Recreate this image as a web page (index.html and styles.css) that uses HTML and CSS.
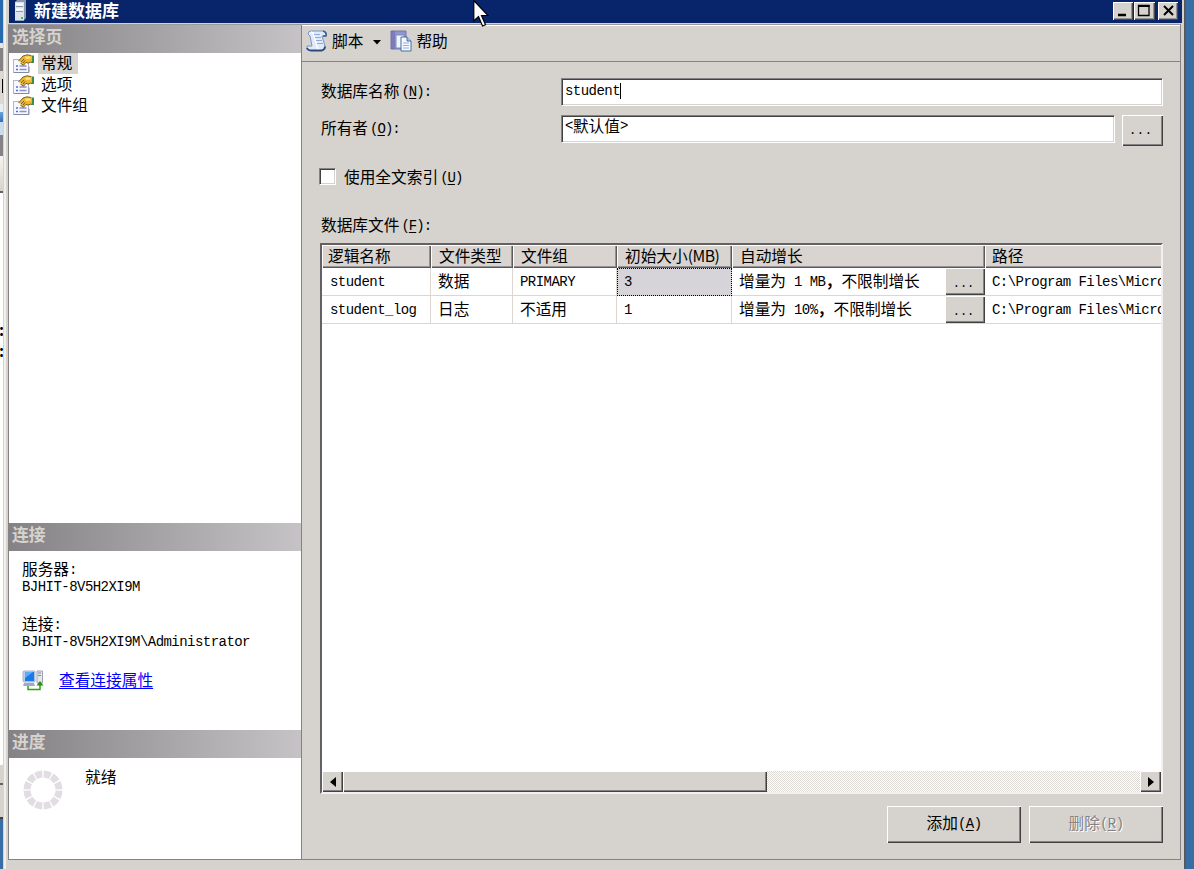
FILE: index.html
```html
<!DOCTYPE html>
<html lang="zh-CN">
<head>
  <meta charset="UTF-8">
  <title>新建数据库</title>
  <link rel="stylesheet" href="styles.css">
</head>
<body>

  <svg class="defs" width="0" height="0">
    <symbol id="page-icon" viewBox="0 0 21 19">
      <rect x=".5" y="5.500" width="15" height="13" fill="#f6f7fe" stroke="#b3b7d0"/>
      <path d="M1 18.500h15v-6" fill="none" stroke="#848aa5"/>
      <path d="M3 12h2M3 15.500h2" stroke="#5e6cc0" stroke-width="1.500"/>
      <path d="M6.500 12h7M6.500 15.500h7" stroke="#8c8ed0" stroke-width="1.500"/>
      <path d="M18 1.500h3v7.500h-3z" fill="#3f8b4b"/>
      <path d="M5.500 7 10 2l4-1.200 5 1v5.700l-4 1.700-2-1-2.500 3-3-2L8 8z" fill="#edb62f"/>
      <path d="M5.500 7 10 2l4-1.200 4 .7M18 8l-3 1.200-2-1-2.500 3-3-2" fill="none" stroke="#80601f"/>
      <path d="M12 2.500h5l1 2-5 .5z" fill="#ffe477"/>
      <path d="M8 8l3-3M10 9l2-2.500" stroke="#705a2c"/>
    </symbol>
  </svg>

  <div class="desktop">
    <div class="behind">
      <div class="b-desk"></div>
      <div class="b-light"></div>
      <div class="b-gray"></div>
      <div class="b-face"></div>
      <div class="b-icon"></div>
      <div class="b-gray2"></div>
      <div class="b-tool"></div>
      <div class="b-page"><span>:</span><span>:</span></div>
      <div class="b-foot"></div>
      <div class="b-foot2"></div>
      <div class="b-desk2"></div>
    </div>

    <div class="window">
      <div class="titlebar">
        <svg class="server" width="12" height="21" viewBox="0 0 12 21">
          <path d="M1 2 3 0h9v18l-2 2.500H1z" fill="#8d9aaf"/>
          <rect x="1" y="2" width="9" height="18.500" fill="#dce4ee"/>
          <path d="M2 4.500h7M2 9.500h7" stroke="#fff" stroke-width="2"/>
          <path d="M2 6.500h7M2 11.500h7" stroke="#8797ad"/>
          <rect x="7" y="17" width="2" height="2" fill="#43c43c"/>
        </svg>
        <span class="title">新建数据库</span>
        <div class="win-btns">
          <div class="win-btn"><svg width="20" height="18"><path d="M5 13h8" stroke="#000" stroke-width="2.500"/></svg></div>
          <div class="win-btn max"><svg width="20" height="18"><path d="M4.500 3.500h10.500v10h-10.500z" fill="none" stroke="#000" stroke-width="1.300"/><path d="M4 4h11.500" stroke="#000" stroke-width="2"/></svg></div>
          <div class="win-btn"><svg width="20" height="18"><path d="M6 4l9 9M15 4l-9 9" stroke="#000" stroke-width="2"/></svg></div>
        </div>
      </div>

      <div class="content">
        <div class="side">
          <div class="side-head">选择页</div>
          <div class="pages">
            <div class="page"><svg width="21" height="19"><use href="#page-icon"/></svg><span class="selected">常规</span></div>
            <div class="page"><svg width="21" height="19"><use href="#page-icon"/></svg><span>选项</span></div>
            <div class="page"><svg width="21" height="19"><use href="#page-icon"/></svg><span>文件组</span></div>
          </div>
          <div class="side-head">连接</div>
          <div class="connection">
            <div class="info">服务器<i>:</i></div>
            <div class="info-val"><i>BJHIT-8V5H2XI9M</i></div>
            <div class="info second">连接<i>:</i></div>
            <div class="info-val"><i>BJHIT-8V5H2XI9M\Administrator</i></div>
            <div class="link-row">
              <svg width="22" height="21" viewBox="0 0 22 21">
                <rect x="1" y="1" width="12" height="11" rx="1" fill="#b9cce8" stroke="#a5b5d1"/>
                <rect x="3" y="2" width="9" height="9" fill="#1a78e8"/>
                <path d="M3 2h8L3 8z" fill="#59aef9"/>
                <path d="M2 13h10l1 3H1z" fill="#9caace"/>
                <path d="M15 1h5.500v12H15z" fill="#e4e7ed" stroke="#9ba3b2"/>
                <path d="M16 3h3M16 5.500h3" stroke="#7d899b"/>
                <path d="M6 16v3.500h12V14" fill="none" stroke="#33a10c" stroke-width="1.500"/>
                <path d="M14.500 15.500 18 11l3.500 4.500z" fill="#26920b"/>
              </svg>
              <a class="link">查看连接属性</a>
            </div>
          </div>
          <div class="side-head">进度</div>
          <div class="progress">
            <svg width="40" height="40" viewBox="0 0 40 40">
              <circle cx="20" cy="20" r="16" fill="none" stroke="#e1dde2" stroke-width="7" pathLength="120" stroke-dasharray="8.300 1.700" stroke-dashoffset="-.85"/>
            </svg>
            <span>就绪</span>
          </div>
        </div>

        <div class="main">
          <div class="toolbar">
            <svg width="21" height="22" viewBox="0 0 21 22">
              <path d="M2 4Q2 1 5 1h12q3.500 1 3 5h-4l3 10q0 4.500-4 4.500H3Q0 20 1 16h5L4 6z" fill="#dfeafb" stroke="#7c94c4"/>
              <path d="M5 2q3 1 3 4l3 10q0 4 3 4" fill="none" stroke="#fff" stroke-width="1.500"/>
              <path d="M1 18q1 2.500 4 2.500h11q3-1 3-4" fill="none" stroke="#2f467f" stroke-width="1.800"/>
              <path d="M8 4.500h6M9 7.500h6M10 10.500h6M11 13.500h6" stroke="#8eabd8"/>
              <path d="M17 1q4 1 3 5h-3" fill="none" stroke="#455d94" stroke-width="1.500"/>
            </svg>
            <span class="tool-text">脚本</span>
            <svg class="arrow" width="8" height="5"><path d="M0 0h8L4 4.500z"/></svg>
            <svg width="22" height="22" viewBox="0 0 22 22">
              <path d="M1 1h15v18H1z" fill="#9492d0" stroke="#7772b0"/>
              <path d="M2 1v18M4 1v18" stroke="#6b65a5"/>
              <path d="M6 5h8v13H6z" fill="#eef5ff" stroke="#7991bb"/>
              <path d="M11 7h6l4 4v10H11z" fill="#f5faff" stroke="#4a6a9e"/>
              <path d="M17 7v4h4" fill="#b9cdec" stroke="#4a6a9e"/>
              <path d="M13 13h6M13 15.500h6M13 18h6" stroke="#91afd8"/>
            </svg>
            <span class="tool-text help">帮助</span>
          </div>

          <div class="form">
            <div class="field">
              <label>数据库名称<i>(<u>N</u>):</i></label>
              <div class="input name"><i>student</i><span class="caret"></span></div>
            </div>
            <div class="field owner">
              <label>所有者<i>(<u>O</u>):</i></label>
              <div class="input"><i>&lt;</i>默认值<i>&gt;</i></div>
              <div class="button dots">...</div>
            </div>
            <div class="check-row">
              <div class="checkbox"></div>
              <label>使用全文索引<i>(<u>U</u>)</i></label>
            </div>
            <div class="files-label">数据库文件<i>(<u>F</u>):</i></div>

            <div class="grid">
              <div class="row head">
                <div>逻辑名称</div>
                <div>文件类型</div>
                <div>文件组</div>
                <div>初始大小<span class="unit">(MB)</span></div>
                <div>自动增长</div>
                <div>路径</div>
              </div>
              <div class="row">
                <div class="indent"><i>student</i></div>
                <div>数据</div>
                <div><i>PRIMARY</i></div>
                <div class="current"><i>3</i></div>
                <div class="growth"><span>增量为<i> 1 MB</i><b>，</b>不限制增长</span><span class="button cell-btn">...</span></div>
                <div><i>C:\Program Files\Micro</i></div>
              </div>
              <div class="row">
                <div class="indent"><i>student_log</i></div>
                <div>日志</div>
                <div>不适用</div>
                <div><i>1</i></div>
                <div class="growth"><span>增量为<i> 10%</i><b>，</b>不限制增长</span><span class="button cell-btn">...</span></div>
                <div><i>C:\Program Files\Micro</i></div>
              </div>
              <div class="scrollbar">
                <div class="button scroll-btn"><svg width="6" height="10"><path d="M6 0v10L0 5z"/></svg></div>
                <div class="button thumb"></div>
                <div class="track"></div>
                <div class="button scroll-btn"><svg width="6" height="10"><path d="M0 0v10l6-5z"/></svg></div>
              </div>
            </div>

            <div class="actions">
              <div class="button action">添加<i>(<u>A</u>)</i></div>
              <div class="button action disabled">删除<i>(<u>R</u>)</i></div>
            </div>
          </div>
        </div>
      </div>
    </div>
  </div>

  <svg class="cursor" width="16" height="28" viewBox="0 0 16 28">
    <path d="M.8.500v20.500l4.700-4.500 4 9.500 3-1.300-4-9.200H15z" fill="#fff" stroke="#000" stroke-width="1.200"/>
  </svg>

</body>
</html>
```
FILE: styles.css
```css
* {
  box-sizing: border-box;
}

body {
  margin: 0;
  font-family: "Noto Sans CJK SC", sans-serif;
  font-size: 15.7px;
  line-height: 20px;
  color: #000;
  white-space: nowrap;
  overflow: hidden;
}

/* half-width text */
i {
  font-family: "Liberation Mono", monospace;
  font-style: normal;
  font-size: 14px;
  letter-spacing: -0.54px;
  line-height: 16px;
  vertical-align: 1px;
  white-space: pre;
}

u {
  text-underline-offset: 2px;
}

svg {
  display: block;
  flex: none;
}

.defs {
  position: absolute;
}

.desktop {
  display: flex;
  height: 869px;
  background: #396da5;
}

/* strip of the window behind */
.behind {
  width: 4px;
  display: flex;
  flex-direction: column;
  overflow: hidden;
  border-right: 1px solid #d6d3ce;
}

.b-desk { height: 43px; background: #2868ae; }
.b-light { height: 5px; background: #e8e6e0; }
.b-gray { height: 23px; background: #848284; }
.b-face { height: 33px; background: linear-gradient(#000, #000) 2px 8px / 1px 14px no-repeat #ddd8d3; }
.b-icon { height: 31px; background: linear-gradient(#e5edf5 8px, #6aa4dc 8px, #2e70b8 18px, #cbdceb 18px); }
.b-gray2 { height: 21px; background: #848284; }
.b-tool { height: 37px; background: linear-gradient(#f6f4f0, #d6d3ce); border-bottom: 2px solid #636163; }
.b-page { height: 572px; background: #fff; padding-top: 126px; line-height: 21px; font-weight: bold; }
.b-page span { display: block; margin-left: -1px; }
.b-foot { height: 20px; background: #d6d3ce; border-bottom: 2px solid #636163; }
.b-foot2 { height: 34px; background: #d6d3ce; border-bottom: 2px solid #424142; }
.b-desk2 { flex: 1; }

.window {
  width: 1182px;
  background: #d6d3ce;
  border-left: 2px solid #f0efe9;
  border-right: 2px solid #5a595a;
  padding: 0 2px;
  display: flex;
  flex-direction: column;
}

.titlebar {
  height: 23px;
  margin-left: 1px;
  background: #08246b;
  display: flex;
  align-items: flex-start;
  padding: 0 4px 0 5px;
}

.title {
  color: #fff;
  font-weight: bold;
  font-size: 17px;
  line-height: 20px;
  margin-left: 8px;
  flex: 1;
}

.win-btns {
  display: flex;
  padding-top: 2px;
}

.win-btn {
  width: 20px;
  height: 18px;
  background: #d6d3ce;
  box-shadow: inset 1px 1px #fff, inset -1px -1px #4a494a, inset -2px -2px #949294;
}

.win-btn.max {
  width: 21px;
  margin: 0 3px 0 1px;
}

.content {
  height: 836px;
  display: flex;
  border: 1px solid #848284;
  border-top-color: #9c9a9c;
  margin-top: 1px;
  margin-right: 1px;
  background: #fff;
}

.side {
  width: 293px;
  display: flex;
  flex-direction: column;
  border-right: 1px solid #848284;
}

.side-head {
  height: 28px;
  background: linear-gradient(to right, #848284, #c6c3c6);
  color: #d6d3ce;
  font-weight: bold;
  font-size: 16.8px;
  line-height: 23px;
  padding-left: 3px;
}

.pages {
  height: 470px;
}

.page {
  height: 21px;
  display: flex;
  padding-left: 4px;
  align-items: center;
}

.page span {
  margin-left: 4px;
  padding: 0 6px 0 3px;
  height: 21px;
}

.page .selected {
  background: #d6d3ce;
}

.connection {
  height: 179px;
  padding: 8px 0 0 13px;
}

.info {
  height: 18px;
}

.info-val {
  height: 14px;
  line-height: 18px;
}

.second {
  margin-top: 23px;
}

.link-row {
  display: flex;
  margin-top: 24px;
}

.link {
  color: #00f;
  text-decoration: underline;
  text-underline-offset: 2px;
  margin-left: 15px;
}

.progress {
  flex: 1;
  display: flex;
  padding: 12px 0 0 14px;
}

.progress span {
  margin: -3px 0 0 22px;
}

.main {
  flex: 1;
  background: #d6d3ce;
  display: flex;
  flex-direction: column;
}

.toolbar {
  height: 37px;
  display: flex;
  align-items: center;
  padding: 0 0 5px 4px;
  border-top: 1px solid #fff;
  border-bottom: 1px solid #848284;
}

.tool-text {
  margin-left: 5px;
}

.help {
  margin-left: 4px;
}

.arrow {
  margin: 2px 9px 0 10px;
}

.form {
  flex: 1;
  padding: 16px 17px 0 18px;
}

.field {
  display: flex;
  height: 28px;
}

.field label {
  width: 241px;
  padding-top: 3px;
  padding-left: 1px;
}

label i,
.files-label i {
  margin-left: 2px;
  letter-spacing: -1px;
}

.input {
  flex: 1;
  height: 28px;
  background: #fff;
  border: 1px solid;
  border-color: #848284 #fff #fff #848284;
  box-shadow: inset 1px 1px #424142, inset -1px -1px #d6d3ce;
  padding: 0 3px;
  display: flex;
}

.input i {
  line-height: 20px;
}

.name i {
  margin-top: 2px;
}

.caret {
  width: 1px;
  height: 16px;
  margin-top: 4px;
  background: #000;
}

.owner {
  margin-top: 9px;
  height: 31px;
}

.button {
  background: #d6d3ce;
  box-shadow: inset 1px 1px #fff, inset -1px -1px #424142, inset -2px -2px #848284;
}

.dots {
  width: 41px;
  height: 31px;
  margin-left: 7px;
  font-family: "Liberation Mono", monospace;
  font-size: 13px;
  line-height: 32px;
  padding-right: 4px;
  text-align: center;
}

.check-row {
  display: flex;
  margin-top: 21px;
  height: 20px;
}

.checkbox {
  width: 17px;
  height: 17px;
  background: #fff;
  border: 1px solid;
  border-color: #848284 #fff #fff #848284;
  box-shadow: inset 1px 1px #424142, inset -1px -1px #d6d3ce;
  margin: 1px 8px 0 -1px;
}

.files-label {
  margin: 28px 0 8px 1px;
  height: 20px;
}

.grid {
  width: 843px;
  height: 551px;
  background: #fff;
  border: 2px solid;
  border-color: #636163 #f2f0ee #f2f0ee #636163;
  display: flex;
  flex-direction: column;
  overflow: hidden;
}

.row {
  display: grid;
  grid-template-columns: 109px 82px 104px 115px 253px 176px;
  height: 28px;
}

.row > div {
  border-right: 1px solid #ddd5d0;
  border-bottom: 1px solid #ddd5d0;
  padding: 3px 0 0 7px;
  overflow: hidden;
}

.row > div:last-child {
  border-right: 0;
}

.head {
  height: 23px;
}

.head > div {
  background: #d9d4cf;
  border: 0;
  padding: 1px 0 0 6px;
  box-shadow: inset 1px 1px #fff, inset -1px -1px #5a595a, inset -2px -2px #949294;
}

.head > div:nth-child(n+2) {
  padding-left: 8px;
}

.head > div:last-child {
  padding-left: 7px;
  box-shadow: inset 1px 1px #fff, inset 0 -1px #5a595a, inset 0 -2px #949294;
}

.unit {
  letter-spacing: -0.5px;
}

.row > .indent {
  padding-left: 8px;
}

.row > .current {
  background: #d6d3d9;
  border: 1px dotted #000;
  padding-left: 6px;
  padding-top: 2px;
}

.row > .growth {
  display: flex;
  justify-content: space-between;
  padding-right: 0;
  border-right: 0;
}

.growth b {
  display: inline-block;
  width: 16px;
}

.cell-btn {
  width: 40px;
  height: 27px;
  margin-top: -3px;
  padding-right: 3px;
  font-family: "Liberation Mono", monospace;
  font-size: 12px;
  line-height: 33px;
  text-align: center;
}

.scrollbar {
  display: flex;
  height: 21px;
  margin-top: auto;
}

.scroll-btn {
  width: 21px;
  display: flex;
  align-items: center;
  justify-content: center;
}

.thumb {
  width: 424px;
}

.track {
  flex: 1;
  background: repeating-conic-gradient(#fff 0 25%, #dedbd6 0 50%) 0 0 / 2px 2px;
}

.actions {
  display: flex;
  justify-content: flex-end;
  gap: 8px;
  margin-top: 12px;
}

.action {
  width: 134px;
  height: 37px;
  line-height: 33px;
  text-align: center;
}

.disabled {
  color: #848284;
  text-shadow: 1px 1px #fff;
}

.cursor {
  position: absolute;
  left: 473px;
  top: 0;
}
```
